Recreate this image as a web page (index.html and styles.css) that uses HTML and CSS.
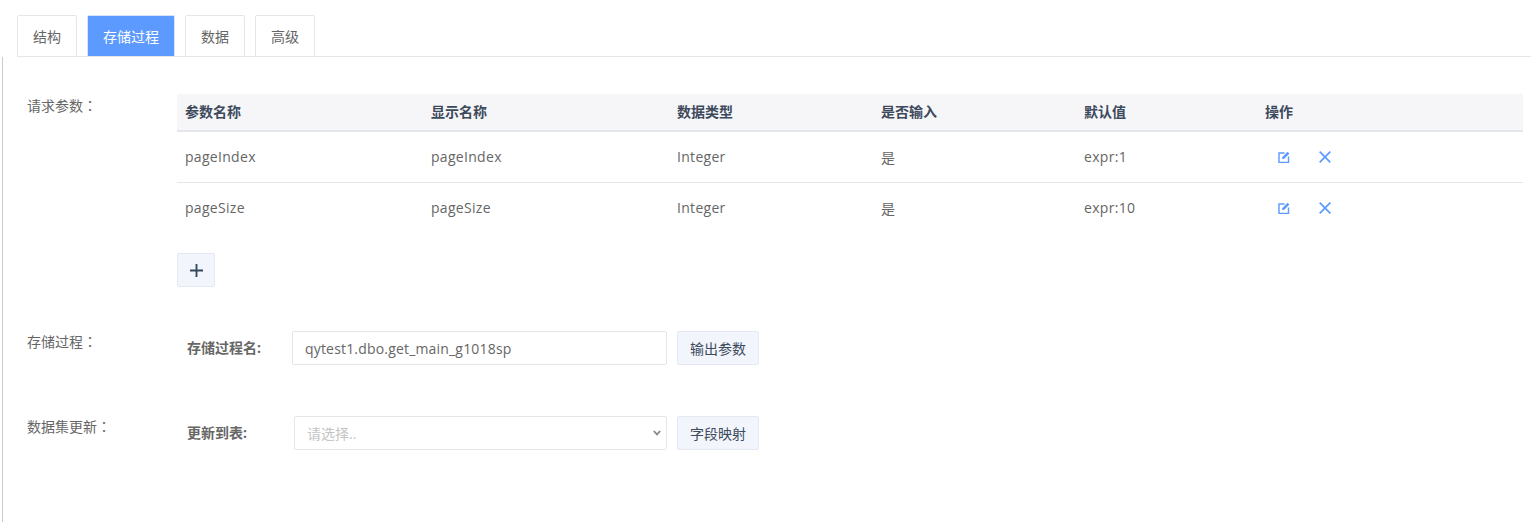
FILE: index.html
```html
<!DOCTYPE html>
<html lang="zh">
<head>
<meta charset="utf-8">
<title>存储过程</title>
<link rel="stylesheet" href="styles.css">
</head>
<body>
<nav class="tabs">
  <a class="tab">结构</a>
  <a class="tab active">存储过程</a>
  <a class="tab">数据</a>
  <a class="tab">高级</a>
</nav>
<main class="panel">
  <section class="section params">
    <div class="section-label" lang="zh-Hant">请求参数：</div>
    <div class="section-body">
      <table class="grid">
        <colgroup>
          <col class="c1"><col class="c2"><col class="c3"><col class="c4"><col class="c5"><col>
        </colgroup>
        <thead>
          <tr><th>参数名称</th><th>显示名称</th><th>数据类型</th><th>是否输入</th><th>默认值</th><th>操作</th></tr>
        </thead>
        <tbody>
          <tr>
            <td>pageIndex</td><td>pageIndex</td><td>Integer</td><td>是</td><td>expr:1</td>
            <td><div class="ops">
              <svg class="icon" viewBox="0 0 12 12"><path d="M6.5 2H1v9.5h9.5V5.5" fill="none" stroke="#5c9aff" stroke-width="1.4"/><path d="M4.2 6.2 9.6.8l1.8 1.8L6 8H4.2z" fill="#5c9aff"/></svg>
              <svg class="icon" viewBox="0 0 12 12"><path d="M.7.7l10.6 10.6M11.3.7.7 11.3" fill="none" stroke="#5c9aff" stroke-width="1.7"/></svg>
            </div></td>
          </tr>
          <tr>
            <td>pageSize</td><td>pageSize</td><td>Integer</td><td>是</td><td>expr:10</td>
            <td><div class="ops">
              <svg class="icon" viewBox="0 0 12 12"><path d="M6.5 2H1v9.5h9.5V5.5" fill="none" stroke="#5c9aff" stroke-width="1.4"/><path d="M4.2 6.2 9.6.8l1.8 1.8L6 8H4.2z" fill="#5c9aff"/></svg>
              <svg class="icon" viewBox="0 0 12 12"><path d="M.7.7l10.6 10.6M11.3.7.7 11.3" fill="none" stroke="#5c9aff" stroke-width="1.7"/></svg>
            </div></td>
          </tr>
        </tbody>
      </table>
      <button class="btn add" type="button"><svg class="plus" viewBox="0 0 14 14"><path d="M7 0v14M0 7h14" fill="none" stroke="#34495e" stroke-width="2"/></svg></button>
    </div>
  </section>
  <section class="section proc">
    <div class="section-label" lang="zh-Hant">存储过程：</div>
    <div class="section-body field-row">
      <label class="field-label">存储过程名:</label>
      <input class="control name-input" type="text" value="qytest1.dbo.get_main_g1018sp">
      <button class="btn" type="button">输出参数</button>
    </div>
  </section>
  <section class="section update">
    <div class="section-label" lang="zh-Hant">数据集更新：</div>
    <div class="section-body field-row">
      <label class="field-label wide">更新到表:</label>
      <div class="select-wrap">
        <select class="control table-select"><option>请选择..</option></select>
        <svg class="chevron" viewBox="0 0 8 6"><path d="M.8 1 4 4.4 7.2 1" fill="none" stroke="#888" stroke-width="1.8"/></svg>
      </div>
      <button class="btn" type="button">字段映射</button>
    </div>
  </section>
</main>
</body>
</html>
```
FILE: styles.css
```css
* { box-sizing: border-box; }
html, body { margin: 0; padding: 0; background: #fff; }
body {
  height: 522px;
  overflow: hidden;
  font-family: "Open Sans", "Noto Sans CJK SC", sans-serif;
  font-size: 14px;
  color: #606266;
}
.tabs {
  display: flex;
  gap: 10px;
  margin: 15px 0 0 17px;
  height: 42px;
  border-bottom: 1px solid #e4e6eb;
}
.tab {
  width: 60px;
  height: 41px;
  display: flex;
  align-items: center;
  justify-content: center;
  padding-bottom: 1px;
  border: 1px solid #e4e6eb;
  border-bottom: 0;
  border-radius: 2px 2px 0 0;
  color: #666;
}
.tab.active {
  width: 88px;
  background: #5c9aff;
  border-color: #d5e4fb;
  color: #fff;
}
.panel {
  margin-left: 2px;
  height: 465px;
  border-left: 1px solid #ccc;
}
.section {
  display: flex;
  padding-left: 24px;
}
.section-label {
  width: 150px;
  flex: none;
  font-family: "Noto Sans CJK TC", sans-serif;
  line-height: 20px;
  color: #666;
  text-spacing-trim: space-all;
}
.params { padding-top: 37px; }
.params .section-label { padding-top: 1px; }
.section-body { flex: 1; padding-right: 8px; }
.grid {
  width: 100%;
  border-collapse: collapse;
  table-layout: fixed;
  color: #666;
}
.c1, .c2 { width: 246px; }
.c3 { width: 204px; }
.c4 { width: 203px; }
.c5 { width: 181px; }
.grid th {
  height: 37px;
  padding: 0 8px 2px;
  text-align: left;
  font-weight: bold;
  color: #3d4a5c;
  background: #f6f6f9;
  border-bottom: 2px solid #e4e6ee;
}
.grid td {
  height: 51px;
  padding: 0 8px;
  letter-spacing: 0.3px;
  border-bottom: 1px solid #e6e6ea;
}
.grid tbody tr:last-child td { border-bottom: 0; }
.ops {
  display: flex;
  align-items: center;
  gap: 29px;
  padding-left: 13px;
}
.icon { width: 12px; height: 12px; display: block; }
.btn {
  height: 34px;
  width: 82px;
  padding: 0;
  font: inherit;
  color: #3d4a5c;
  background: #f2f5fc;
  border: 1px solid #e4e8f1;
  border-radius: 2px;
}
.btn.add {
  display: flex;
  align-items: center;
  justify-content: center;
  width: 38px;
  margin-top: 20px;
}
.plus { width: 13px; height: 13px; }
.field-row {
  display: flex;
  align-items: flex-start;
  gap: 10px;
  padding-left: 10px;
}
.proc { margin-top: 44px; }
.proc .section-label, .update .section-label { padding-top: 0; }
.update { margin-top: 51px; }
.field-label {
  width: 105px;
  flex: none;
  margin-right: -10px;
  font-weight: bold;
  color: #666;
  line-height: 34px;
}
.field-label.wide { width: 107px; }
.control {
  height: 34px;
  border: 1px solid #e6e6e6;
  border-radius: 2px;
  background: #fff;
  font: inherit;
  color: #666;
  outline: 0;
}
.name-input { width: 375px; padding: 0 12px; letter-spacing: 0.18px; }
.select-wrap { position: relative; width: 373px; height: 34px; }
.table-select {
  display: block;
  width: 100%;
  padding: 0 12px;
  color: #c4c4c4;
  appearance: none;
}
.chevron {
  position: absolute;
  right: 6px;
  top: 14px;
  width: 8px;
  height: 6px;
}
```
